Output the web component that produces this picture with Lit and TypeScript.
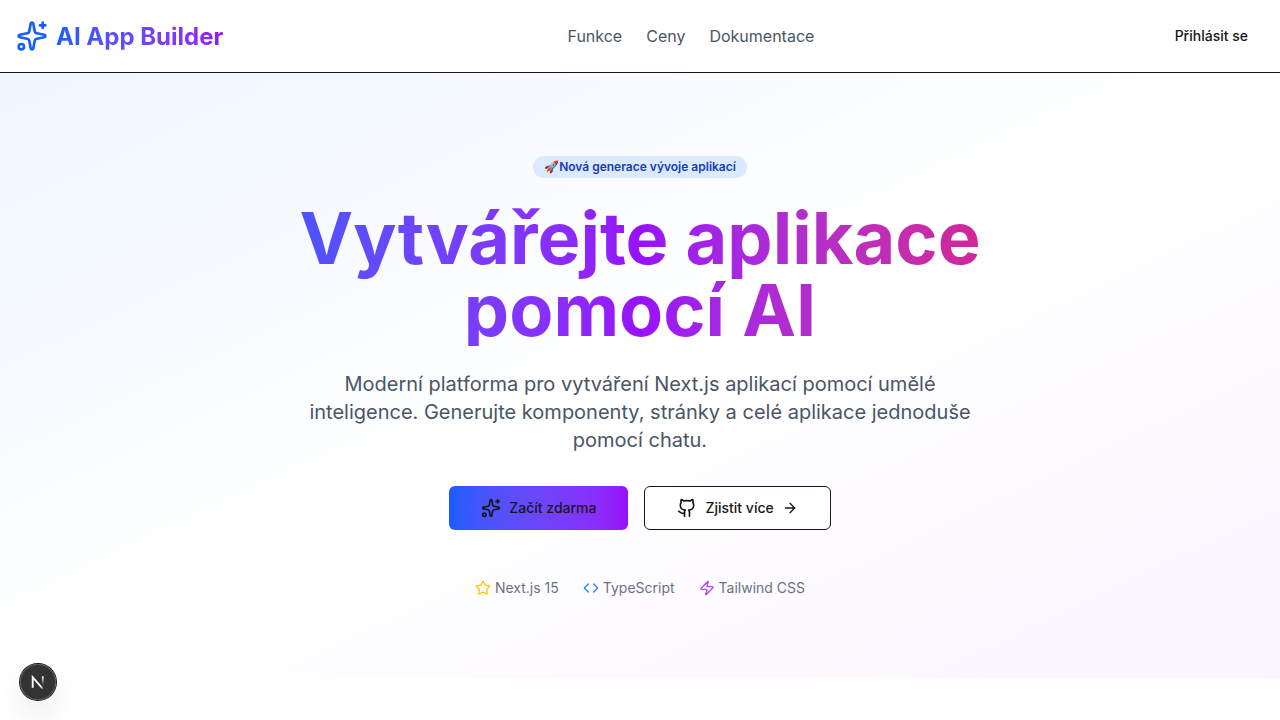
import { LitElement, html, css, svg } from "lit";
import { customElement } from "lit/decorators.js";

const sparkles = svg`<path d="M11.017 2.814a1 1 0 0 1 1.966 0l1.051 5.558a2 2 0 0 0 1.594 1.594l5.558 1.051a1 1 0 0 1 0 1.966l-5.558 1.051a2 2 0 0 0-1.594 1.594l-1.051 5.558a1 1 0 0 1-1.966 0l-1.051-5.558a2 2 0 0 0-1.594-1.594l-5.558-1.051a1 1 0 0 1 0-1.966l5.558-1.051a2 2 0 0 0 1.594-1.594z"/><path d="M20 2v4"/><path d="M22 4h-4"/><circle cx="4" cy="20" r="2"/>`;
const github = svg`<path d="M15 22v-4a4.8 4.8 0 0 0-1-3.5c3 0 6-2 6-5.5.08-1.25-.27-2.48-1-3.5.28-1.15.28-2.35 0-3.5 0 0-1 0-3 1.5-2.64-.5-5.36-.5-8 0C6 2 5 2 5 2c-.3 1.15-.3 2.35 0 3.5A5.403 5.403 0 0 0 4 9c0 3.5 3 5.5 6 5.5-.39.49-.68 1.05-.85 1.65-.17.6-.22 1.23-.15 1.85v4"/><path d="M9 18c-4.51 2-5-2-7-2"/>`;
const arrow = svg`<path d="M5 12h14"/><path d="m12 5 7 7-7 7"/>`;
const star = svg`<path d="M11.525 2.295a.53.53 0 0 1 .95 0l2.31 4.679a2.123 2.123 0 0 0 1.595 1.16l5.166.756a.53.53 0 0 1 .294.904l-3.736 3.638a2.123 2.123 0 0 0-.611 1.878l.882 5.14a.53.53 0 0 1-.771.56l-4.618-2.428a2.122 2.122 0 0 0-1.973 0L6.396 21.01a.53.53 0 0 1-.77-.56l.881-5.139a2.122 2.122 0 0 0-.611-1.879L2.16 9.795a.53.53 0 0 1 .294-.906l5.165-.755a2.122 2.122 0 0 0 1.597-1.16z"/>`;
const code = svg`<path d="m16 18 6-6-6-6"/><path d="m8 6-6 6 6 6"/>`;
const zap = svg`<path d="M4 14a1 1 0 0 1-.78-1.63l9.9-10.2a.5.5 0 0 1 .86.46l-1.92 6.02A1 1 0 0 0 13 10h7a1 1 0 0 1 .78 1.63l-9.9 10.2a.5.5 0 0 1-.86-.46l1.92-6.02A1 1 0 0 0 11 14z"/>`;

const icon = (shape: unknown, cls: string) =>
  html`<svg class="icon ${cls}" viewBox="0 0 24 24" aria-hidden="true">${shape}</svg>`;

@customElement("app-root")
export class AppRoot extends LitElement {
  static styles = css`
    :host {
      display: block;
      min-height: 100vh;
      background: #fff;
      color: #171717;
      font: 400 16px/24px Inter, "Noto Sans", sans-serif;
      --blue: #155dfc;
      --purple: #9810fa;
      --pink: #e60076;
    }
    *, *::before { box-sizing: border-box; }
    a { color: inherit; text-decoration: none; }
    h1, p, ul { margin: 0; padding: 0; }
    .icon {
      flex: none;
      width: 16px;
      height: 16px;
      fill: none;
      stroke: currentColor;
      stroke-width: 2;
      stroke-linecap: round;
      stroke-linejoin: round;
    }
    .medium { width: 20px; height: 20px; }
    .large { width: 32px; height: 32px; }
    .blue { color: var(--blue); }

    .header {
      display: flex;
      align-items: center;
      justify-content: space-between;
      padding: 16px;
      border-bottom: 1px solid #171717;
    }
    .brand { display: flex; align-items: center; gap: 8px; }
    .brand-name {
      font-size: 24px;
      line-height: 33px;
      font-weight: 700;
      color: transparent;
      background: linear-gradient(to right in oklab, var(--blue), var(--purple));
      -webkit-background-clip: text;
      background-clip: text;
    }
    .nav { display: flex; gap: 24px; color: #4a5565; }

    .btn {
      display: inline-flex;
      align-items: center;
      justify-content: center;
      gap: 8px;
      height: 44px;
      padding: 0 32px;
      border: 1px solid #171717;
      border-radius: 6px;
      background: #fff;
      color: #171717;
      font: 500 14px/20px Inter, "Noto Sans", sans-serif;
      cursor: pointer;
    }
    .btn.ghost { height: 40px; padding: 0 16px; border: 0; background: none; }
    .btn.primary {
      border: 0;
      background: linear-gradient(to right in oklab, var(--blue), var(--purple));
    }

    .hero {
      padding: 80px 16px;
      text-align: center;
      background: linear-gradient(to bottom right in oklab, #eff6ff, #fff, #faf5ff);
    }
    .inner { max-width: 896px; margin: 0 auto; }
    .badge-row { display: flex; align-items: flex-end; justify-content: center; height: 25px; margin-bottom: 24px; }
    .badge {
      display: inline-flex;
      align-items: center;
      padding: 3px 11px;
      border-radius: 999px;
      background: #dbeafe;
      color: #193cb8;
      font-size: 12px;
      line-height: 16px;
      font-weight: 600;
    }
    .title {
      margin-bottom: 24px;
      font-size: 72px;
      line-height: 72px;
      font-weight: 700;
      color: transparent;
      background: linear-gradient(to right in oklab, var(--blue), var(--purple), var(--pink));
      -webkit-background-clip: text;
      background-clip: text;
    }
    .lead {
      max-width: 672px;
      margin: 0 auto 32px;
      font-size: 20px;
      line-height: 28px;
      color: #4a5565;
    }
    .actions { display: flex; justify-content: center; gap: 16px; margin-bottom: 48px; }
    .features {
      display: flex;
      justify-content: center;
      gap: 24px;
      list-style: none;
      font-size: 14px;
      line-height: 20px;
      color: #6a7282;
    }
    .feature { display: flex; align-items: center; gap: 4px; }
    .yellow { color: #fcc800; }
    .sky { color: #2b7fff; }
    .violet { color: #ad46ff; }

    .dev {
      position: fixed;
      left: 20px;
      bottom: 20px;
      width: 36px;
      height: 36px;
      padding: 0;
      border: 0;
      border-radius: 50%;
      background: rgba(0, 0, 0, 0.8);
      box-shadow: 0 0 0 1px #171717, inset 0 0 0 1px hsla(0, 0%, 100%, 0.14), 0 16px 32px -8px rgba(0, 0, 0, 0.24);
      cursor: pointer;
    }
    .dev-mark { display: block; width: 36px; height: 36px; fill: none; }
  `;

  render() {
    return html`
      <header class="header">
        <a class="brand" href="#">
          ${icon(sparkles, "large blue")}
          <span class="brand-name">AI App Builder</span>
        </a>
        <nav class="nav">
          <a href="#funkce">Funkce</a>
          <a href="#ceny">Ceny</a>
          <a href="#dokumentace">Dokumentace</a>
        </nav>
        <button class="btn ghost" type="button">Přihlásit se</button>
      </header>
      <main class="hero">
        <div class="inner">
          <div class="badge-row"><span class="badge"><span>🚀</span>Nová generace vývoje aplikací</span></div>
          <h1 class="title">Vytvářejte aplikace pomocí AI</h1>
          <p class="lead">
            Moderní platforma pro vytváření Next.js aplikací pomocí umělé inteligence. Generujte
            komponenty, stránky a celé aplikace jednoduše pomocí chatu.
          </p>
          <div class="actions">
            <button class="btn primary" type="button">${icon(sparkles, "medium")}Začít zdarma</button>
            <button class="btn" type="button">${icon(github, "medium")}Zjistit více${icon(arrow, "")}</button>
          </div>
          <ul class="features">
            <li class="feature">${icon(star, "yellow")}Next.js 15</li>
            <li class="feature">${icon(code, "sky")}TypeScript</li>
            <li class="feature">${icon(zap, "violet")}Tailwind CSS</li>
          </ul>
        </div>
      </main>
      <button class="dev" type="button" aria-label="Next.js">
        <svg class="dev-mark" viewBox="0 0 36 36" aria-hidden="true">
          <defs>
            <linearGradient id="diag" x1="17" y1="18" x2="24" y2="25" gradientUnits="userSpaceOnUse">
              <stop stop-color="#fff"/><stop offset=".6" stop-color="#fff"/><stop offset="1" stop-color="#fff" stop-opacity="0"/>
            </linearGradient>
            <linearGradient id="stem" x1="22" y1="12.5" x2="22" y2="21" gradientUnits="userSpaceOnUse">
              <stop stop-color="#fff"/><stop offset="1" stop-color="#fff" stop-opacity="0"/>
            </linearGradient>
          </defs>
          <path d="M12.7 23.8V13.2L23 25" stroke="url(#diag)" stroke-width="1.9"/>
          <path d="M22.8 12.3v9.2" stroke="url(#stem)" stroke-width="1.7"/>
        </svg>
      </button>
    `;
  }
}
